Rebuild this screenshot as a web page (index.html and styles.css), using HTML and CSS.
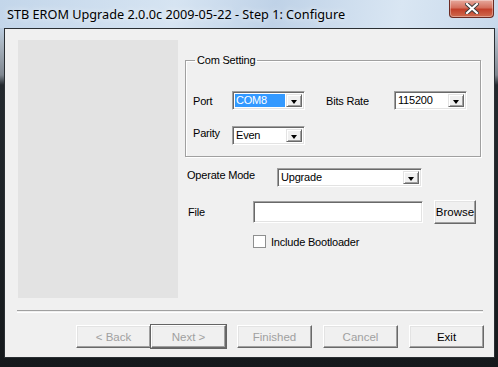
FILE: index.html
```html
<!DOCTYPE html>
<html lang="en">
  <head>
    <meta charset="UTF-8" />
    <title>STB EROM Upgrade</title>
    <link rel="stylesheet" href="styles.css">
  </head>

  <body>
    <div class="window">
      <div class="titlebar">
        <span class="title">STB EROM Upgrade 2.0.0c 2009-05-22 - Step 1: Configure</span>
        <span class="close">
          <svg width="14" height="11" viewBox="0 0 14 11">
            <path d="M2 1 L12 10 M12 1 L2 10" stroke="#3a3a3a" stroke-width="4" stroke-linecap="square" />
            <path d="M2 1 L12 10 M12 1 L2 10" stroke="#fff" stroke-width="2.2" stroke-linecap="square" />
          </svg>
        </span>
      </div>

      <div class="client">
        <div class="main">
          <div class="banner"></div>

          <div class="form">
            <fieldset class="group">
              <legend>Com Setting</legend>
              <div class="group-grid">
                <label>Port</label>
                <div class="combo">
                  <span class="value selected">COM8</span>
                  <span class="drop"></span>
                </div>
                <label>Bits Rate</label>
                <div class="combo">
                  <span class="value">115200</span>
                  <span class="drop"></span>
                </div>
                <label class="lift">Parity</label>
                <div class="combo">
                  <span class="value">Even</span>
                  <span class="drop"></span>
                </div>
              </div>
            </fieldset>

            <div class="row mode">
              <label class="lift">Operate Mode</label>
              <div class="combo wide">
                <span class="value">Upgrade</span>
                <span class="drop"></span>
              </div>
            </div>

            <div class="row file">
              <label>File</label>
              <div class="textbox"></div>
              <button type="button" class="btn browse">Browse</button>
            </div>

            <div class="row check">
              <span class="checkbox"></span>
              <span>Include Bootloader</span>
            </div>
          </div>
        </div>

        <div class="separator"></div>

        <div class="buttons">
          <button type="button" class="btn disabled">&lt; Back</button>
          <button type="button" class="btn disabled default">Next &gt;</button>
          <button type="button" class="btn disabled">Finished</button>
          <button type="button" class="btn disabled">Cancel</button>
          <button type="button" class="btn">Exit</button>
        </div>
      </div>
    </div>
  </body>
</html>
```

FILE: styles.css
```css
body {
  margin: 0;
  background: #111;
}

.window {
  display: flex;
  flex-direction: column;
  width: 498px;
  height: 367px;
  box-sizing: border-box;
  padding: 0 3px 9px 4px;
  background: linear-gradient(to bottom, #c6d8ea 0, #bccfe3 26px, #a9b4bf 45px, #7f8790 75px, #23292e 85px, #15191c 100%);
  font-family: "Liberation Sans", Arial, sans-serif;
  font-size: 11px;
  letter-spacing: -0.2px;
  color: #000;
}

.titlebar {
  display: flex;
  align-items: flex-start;
  height: 28px;
  margin-left: -4px;
  margin-right: -3px;
  background: linear-gradient(100deg, #c3d6ea 0%, #d6e4f2 35%, #bfd2e7 55%, #d9e6f3 80%, #c8d9eb 100%);
}

.title {
  margin: 5px 0 0 7px;
  font-family: "Noto Sans", "Open Sans", sans-serif;
  font-size: 12.7px;
  letter-spacing: 0;
  color: #000;
  text-shadow: 0 0 6px rgba(255, 255, 255, 0.9);
}

.close {
  display: flex;
  align-items: center;
  justify-content: center;
  width: 45px;
  height: 18px;
  margin: 0 4px 0 auto;
  box-sizing: border-box;
  border: 1px solid #6b2a22;
  border-top: 0;
  border-radius: 0 0 4px 4px;
  background: linear-gradient(to bottom, #e7a99d 0, #d4705d 45%, #c2402a 55%, #cf6a4e 100%);
  box-shadow: inset 0 0 0 1px rgba(255, 255, 255, 0.35);
}

.client {
  flex: 1;
  display: flex;
  flex-direction: column;
  padding: 11px 11px 0 12px;
  border: 1px solid #2a2f33;
  background: #f0f0f0;
}

.main {
  display: flex;
  height: 258px;
}

.banner {
  width: 160px;
  margin-left: 1px;
  background: #e3e3e3;
}

.form {
  display: flex;
  flex-direction: column;
  margin-left: 7px;
}

.group {
  width: 296px;
  box-sizing: border-box;
  margin: 14px 0 0;
  padding: 24px 7px 11px;
  border: 1px solid #a0a0a0;
  box-shadow: inset 1px 1px #fff, 1px 1px #fff;
}

.group legend {
  margin-left: 2px;
  padding: 0 2px;
  line-height: 13px;
}

.group-grid {
  display: grid;
  grid-template-columns: 39px 94px 68px 73px;
  row-gap: 16px;
  align-items: center;
}

.lift {
  margin-bottom: 6px;
}

.combo {
  display: flex;
  width: 73px;
  height: 19px;
  box-sizing: border-box;
  padding: 2px;
  border: 1px solid;
  border-color: #a0a0a0 #fff #fff #a0a0a0;
  box-shadow: inset 1px 1px #696969, inset -1px -1px #e3e3e3;
  background: #fff;
}

.combo.wide {
  width: 145px;
}

.value {
  flex: 1;
  padding-left: 1px;
  line-height: 13px;
}

.value.selected {
  margin-right: 1px;
  background: #3399ff;
  color: #fff;
}

.drop {
  position: relative;
  width: 16px;
  box-sizing: border-box;
  border: 1px solid;
  border-color: #e3e3e3 #696969 #696969 #e3e3e3;
  box-shadow: inset 1px 1px #fff, inset -1px -1px #a0a0a0;
  background: #f0f0f0;
}

.drop::after {
  content: "";
  position: absolute;
  left: 4px;
  top: 5px;
  border-left: 3.5px solid transparent;
  border-right: 3.5px solid transparent;
  border-top: 4px solid #000;
}

.row {
  display: flex;
  align-items: center;
}

.mode {
  margin-top: 11px;
  padding-left: 2px;
}

.mode label {
  width: 90px;
}

.file {
  margin-top: 13px;
  padding-left: 3px;
}

.file label {
  width: 65px;
}

.textbox {
  width: 170px;
  height: 22px;
  box-sizing: border-box;
  border: 1px solid;
  border-color: #a0a0a0 #fff #fff #a0a0a0;
  box-shadow: inset 1px 1px #696969, inset -1px -1px #e3e3e3;
  background: #fff;
}

.check {
  gap: 5px;
  margin-top: 11px;
  padding-left: 68px;
}

.checkbox {
  width: 13px;
  height: 13px;
  box-sizing: border-box;
  border: 1px solid #8e8f8f;
  background: #fff;
}

.btn {
  height: 23px;
  padding: 0;
  border: 1px solid;
  border-color: #fff #696969 #696969 #fff;
  box-shadow: inset -1px -1px #a0a0a0, inset 1px 1px #e3e3e3;
  background: #f0f0f0;
  font: inherit;
  font-size: 11.5px;
  color: #000;
}

.browse {
  width: 42px;
  height: 24px;
  margin-left: 11px;
}

.separator {
  height: 1px;
  margin-top: 12px;
  border-top: 1px solid #a0a0a0;
  border-bottom: 1px solid #fff;
}

.buttons {
  display: flex;
  justify-content: flex-end;
  gap: 11px;
  margin: 12px -1px 0 0;
}

.buttons .btn {
  width: 75px;
}

.btn.disabled {
  color: #a0a0a0;
}

.btn.default {
  margin-left: -11px;
  outline: 1px solid #646464;
  outline-offset: 0;
}
```
